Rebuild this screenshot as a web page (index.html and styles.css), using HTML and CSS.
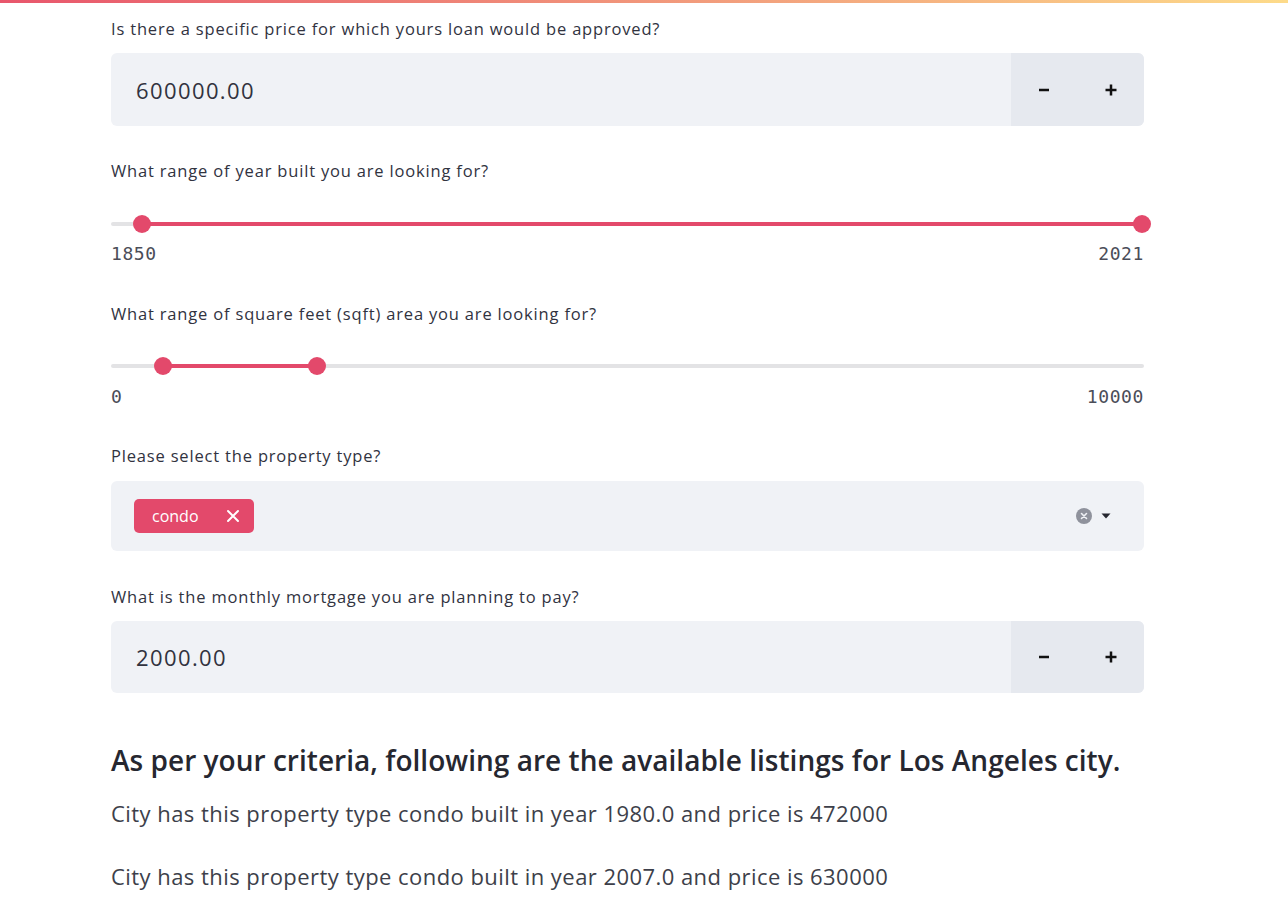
FILE: index.html
```html
<!DOCTYPE html>
<html lang="en">
<head>
<meta charset="utf-8">
<title>Listings</title>
<link rel="stylesheet" href="styles.css">
</head>
<body>
<div class="topbar"></div>
<main class="main">
  <section class="widget w1">
    <label class="label">Is there a specific price for which yours loan would be approved?</label>
    <div class="number-input">
      <div class="number-value">600000.00</div>
      <div class="steps">
        <button class="step" aria-label="minus"><svg width="12" height="12" viewBox="0 0 12 12"><rect x="1" y="4.75" width="10" height="2.5" fill="#111"/></svg></button>
        <button class="step" aria-label="plus"><svg width="12" height="12" viewBox="0 0 12 12"><rect x="0.5" y="4.75" width="11" height="2.5" fill="#111"/><rect x="4.75" y="0.5" width="2.5" height="11" fill="#111"/></svg></button>
      </div>
    </div>
  </section>

  <section class="widget w2">
    <label class="label">What range of year built you are looking for?</label>
    <div class="slider">
      <div class="track"></div>
      <div class="fill" style="left:31px; width:1000px"></div>
      <div class="thumb" style="left:31px"></div>
      <div class="thumb" style="left:1031px"></div>
    </div>
    <div class="ticks"><span>1850</span><span>2021</span></div>
  </section>

  <section class="widget w3">
    <label class="label">What range of square feet (sqft) area you are looking for?</label>
    <div class="slider">
      <div class="track"></div>
      <div class="fill" style="left:52px; width:154px"></div>
      <div class="thumb" style="left:52px"></div>
      <div class="thumb" style="left:206px"></div>
    </div>
    <div class="ticks"><span>0</span><span>10000</span></div>
  </section>

  <section class="widget w4">
    <label class="label">Please select the property type?</label>
    <div class="multiselect">
      <span class="tag">condo
        <svg class="tag-x" width="14" height="14" viewBox="0 0 14 14"><path d="M2 2 L12 12 M12 2 L2 12" stroke="#fff" stroke-width="2" stroke-linecap="round"/></svg>
      </span>
      <div class="ms-icons">
        <svg width="18" height="18" viewBox="0 0 18 18"><circle cx="9" cy="9" r="8" fill="#8f929c"/><path d="M6.5 6.5 L11.5 11.5 M11.5 6.5 L6.5 11.5" stroke="#f0f2f6" stroke-width="1.6" stroke-linecap="round"/></svg>
        <svg width="12" height="8" viewBox="0 0 12 8"><path d="M1.5 1.5 L10.5 1.5 L6 6.5 Z" fill="#262730"/></svg>
      </div>
    </div>
  </section>

  <section class="widget w5">
    <label class="label">What is the monthly mortgage you are planning to pay?</label>
    <div class="number-input n2">
      <div class="number-value">2000.00</div>
      <div class="steps">
        <button class="step" aria-label="minus"><svg width="12" height="12" viewBox="0 0 12 12"><rect x="1" y="4.75" width="10" height="2.5" fill="#111"/></svg></button>
        <button class="step" aria-label="plus"><svg width="12" height="12" viewBox="0 0 12 12"><rect x="0.5" y="4.75" width="11" height="2.5" fill="#111"/><rect x="4.75" y="0.5" width="2.5" height="11" fill="#111"/></svg></button>
      </div>
    </div>
  </section>

  <h3 class="heading">As per your criteria, following are the available listings for Los Angeles city.</h3>
  <p class="result r1">City has this property type condo built in year 1980.0 and price is 472000</p>
  <p class="result r2">City has this property type condo built in year 2007.0 and price is 630000</p>
</main>
</body>
</html>
```

FILE: styles.css
```css
html, body {
  margin: 0;
  padding: 0;
  background: #ffffff;
  font-family: "Open Sans", "Noto Sans", sans-serif;
  color: #31333f;
}

.topbar {
  height: 3px;
  background: linear-gradient(90deg, #e8566c 0%, #f3a37e 60%, #fddb8a 100%);
}

.main {
  width: 1033px;
  margin-left: 111px;
  display: flex;
  flex-direction: column;
}

.widget {
  display: flex;
  flex-direction: column;
}

.label {
  display: block;
  font-size: 16.5px;
  line-height: 20px;
  height: 20px;
  color: #31333f;
  letter-spacing: 0.82px;
  white-space: nowrap;
}

.w1 { margin-top: 16px; }
.w2 { margin-top: 35px; }
.w3 { margin-top: 40px; }
.w4 { margin-top: 39px; }
.w5 { margin-top: 36px; }

.number-input {
  margin-top: 14px;
  height: 73px;
  display: flex;
  background: #f0f2f6;
  border-radius: 6px;
  overflow: hidden;
}
.number-input.n2 { height: 72px; }

.number-value {
  flex: 1;
  display: flex;
  align-items: center;
  padding-left: 25px;
  font-size: 22px;
  letter-spacing: 1.4px;
  color: #31333f;
}

.steps {
  width: 133px;
  display: flex;
  background: #e6e9ef;
}

.step {
  flex: 1;
  border: none;
  background: transparent;
  padding: 0;
  display: flex;
  align-items: center;
  justify-content: center;
}

.slider {
  position: relative;
  height: 24px;
}
.w2 .slider { margin-top: 31px; }
.w3 .slider { margin-top: 30px; }

.track {
  position: absolute;
  left: 0;
  right: 0;
  top: 10px;
  height: 4px;
  background: #e3e3e5;
  border-radius: 2px;
}
.fill {
  position: absolute;
  top: 10px;
  height: 4px;
  background: #e3496b;
}
.thumb {
  position: absolute;
  top: 3px;
  width: 18px;
  height: 18px;
  margin-left: -9px;
  border-radius: 50%;
  background: #e3496b;
}

.ticks {
  display: flex;
  justify-content: space-between;
  font-family: "DejaVu Sans Mono", monospace;
  font-size: 18px;
  letter-spacing: 0.6px;
  line-height: 20px;
  color: #4b4d58;
}
.w2 .ticks { margin-top: 8px; }
.w3 .ticks { margin-top: 9px; }

.multiselect {
  margin-top: 15px;
  height: 70px;
  background: #f0f2f6;
  border-radius: 6px;
  display: flex;
  align-items: center;
  padding: 0 32px 0 23px;
}

.tag {
  display: inline-flex;
  align-items: center;
  height: 34px;
  width: 120px;
  box-sizing: border-box;
  padding-left: 18px;
  background: #e3496b;
  color: #ffffff;
  border-radius: 5px;
  font-size: 16px;
}
.tag-x {
  margin-left: 27px;
}

.ms-icons {
  margin-left: auto;
  display: flex;
  align-items: center;
  gap: 7px;
}

.heading {
  margin: 49px 0 0;
  font-size: 28px;
  letter-spacing: 0.03px;
  line-height: 36px;
  font-weight: 600;
  color: #262730;
  white-space: nowrap;
}

.result {
  margin: 0;
  font-size: 22px;
  letter-spacing: 0.45px;
  line-height: 30px;
  color: #3d3f4a;
}
.r1 { margin-top: 20px; }
.r2 { margin-top: 33px; }
```
